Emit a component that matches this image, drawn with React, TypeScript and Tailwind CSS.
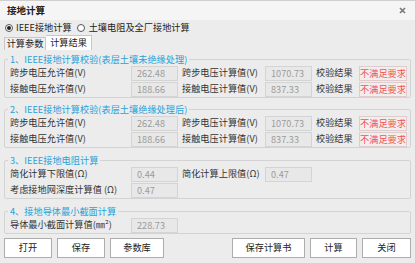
import React from "react";

function Val({ v }: { v: string }) {
  return (
    <div className="w-[47px] h-[15px] border border-[#d4d4d4] bg-[#e8e8e8] text-[#9c9c9c] pl-[5px] leading-[13px] shrink-0">
      {v}
    </div>
  );
}

function Result() {
  return (
    <div className="ml-[1px] w-[48px] h-[15px] border border-[#e0cccc] bg-[#f3eeee] text-[#f25252] text-center leading-[13px] shrink-0">
      不满足要求
    </div>
  );
}

function Label({ t, w }: { t: string; w: string }) {
  return <div className={`${w} shrink-0 whitespace-nowrap text-[#333]`}>{t}</div>;
}

function Group({ title, mt, children }: { title: string; mt: string; children: React.ReactNode }) {
  return (
    <fieldset className={`${mt} border border-[#d3d3d3] rounded-[2px] pl-[5px]`}>
      <legend className="ml-[-2px] px-[2px] leading-[12px] text-[#27a2da]">{title}</legend>
      {children}
    </fieldset>
  );
}

function Row({ children }: { children: React.ReactNode }) {
  return <div className="flex items-center h-[16px]">{children}</div>;
}

function Btn({ t, w }: { t: string; w: string }) {
  return (
    <div className={`${w} h-[20px] border border-[#adadad] bg-white flex items-center justify-center text-[#222]`}>
      {t}
    </div>
  );
}

function Radio({ on }: { on: boolean }) {
  return (
    <div className="w-[8px] h-[8px] rounded-full border border-[#555] bg-white flex items-center justify-center shrink-0">
      {on && <div className="w-[4px] h-[4px] rounded-full bg-[#222]" />}
    </div>
  );
}

export default function App() {
  return (
    <div className="w-[416px] h-[263px] overflow-hidden bg-[#ececec] border-t border-r border-[#cfcfcf] text-[9.2px] font-['Noto_Sans_CJK_SC','Noto_Sans',sans-serif] flex flex-col">
      <div className="h-[19px] bg-[#f5f5f5] flex items-center justify-between pl-[7px] pr-[9px] shrink-0">
        <div className="font-bold text-[#222] text-[9.5px]">接地计算</div>
        <svg width="7" height="7" viewBox="0 0 7 7">
          <path d="M1 1 L6 6 M6 1 L1 6" stroke="#777" strokeWidth="1.6" />
        </svg>
      </div>
      <div className="h-[13px] flex items-center pl-[5px] text-[#222] mt-[1px]">
        <Radio on={true} />
        <span className="ml-[3px]">IEEE接地计算</span>
        <div className="ml-[5px]">
          <Radio on={false} />
        </div>
        <span className="ml-[4px]">土壤电阻及全厂接地计算</span>
      </div>
      <div className="h-[15px] mt-[1px] flex items-end pl-[4px] shrink-0">
        <div className="w-[42px] h-[13px] border border-b-0 border-[#c8c8c8] bg-[#efefef] flex items-center justify-center text-[#222]">
          计算参数
        </div>
        <div className="w-[46px] h-[15px] border border-b-0 border-l-0 border-[#c8c8c8] bg-white flex items-center justify-center text-[#222]">
          计算结果
        </div>
      </div>
      <div className="px-[4px] flex flex-col">
        <Group title="1、IEEE接地计算校验(表层土壤未绝缘处理)" mt="mt-[3px]">
          <Row>
            <Label t="跨步电压允许值(V)" w="w-[121px]" />
            <Val v="262.48" />
            <Label t="跨步电压计算值(V)" w="ml-[4px] w-[83px]" />
            <Val v="1070.73" />
            <Label t="校验结果" w="ml-[4px] w-[42px]" />
            <Result />
          </Row>
          <Row>
            <Label t="接触电压允许值(V)" w="w-[121px]" />
            <Val v="188.66" />
            <Label t="接触电压计算值(V)" w="ml-[4px] w-[83px]" />
            <Val v="837.33" />
            <Label t="校验结果" w="ml-[4px] w-[42px]" />
            <Result />
          </Row>
        </Group>
        <Group title="2、IEEE接地计算校验(表层土壤绝缘处理后)" mt="mt-[5px]">
          <Row>
            <Label t="跨步电压允许值(V)" w="w-[121px]" />
            <Val v="262.48" />
            <Label t="跨步电压计算值(V)" w="ml-[4px] w-[83px]" />
            <Val v="1070.73" />
            <Label t="校验结果" w="ml-[4px] w-[42px]" />
            <Result />
          </Row>
          <Row>
            <Label t="接触电压允许值(V)" w="w-[121px]" />
            <Val v="188.66" />
            <Label t="接触电压计算值(V)" w="ml-[4px] w-[83px]" />
            <Val v="837.33" />
            <Label t="校验结果" w="ml-[4px] w-[42px]" />
            <Result />
          </Row>
        </Group>
        <Group title="3、IEEE接地电阻计算" mt="mt-[6px]">
          <Row>
            <Label t="简化计算下限值(Ω)" w="w-[121px]" />
            <Val v="0.44" />
            <Label t="简化计算上限值(Ω)" w="ml-[4px] w-[83px]" />
            <Val v="0.47" />
          </Row>
          <Row>
            <Label t="考虑接地网深度计算值 (Ω)" w="w-[121px]" />
            <Val v="0.47" />
          </Row>
        </Group>
        <Group title="4、接地导体最小截面计算" mt="mt-[6px]">
          <Row>
            <Label t="导体最小截面计算值(㎜²)" w="w-[121px]" />
            <Val v="228.73" />
          </Row>
        </Group>
        <div className="mt-[4px] flex justify-between">
          <div className="flex gap-[5px]">
            <Btn t="打开" w="w-[48px]" />
            <Btn t="保存" w="w-[48px]" />
            <Btn t="参数库" w="w-[54px]" />
          </div>
          <div className="flex gap-[5px]">
            <Btn t="保存计算书" w="w-[73px]" />
            <Btn t="计算" w="w-[47px]" />
            <Btn t="关闭" w="w-[49px]" />
          </div>
        </div>
      </div>
    </div>
  );
}
